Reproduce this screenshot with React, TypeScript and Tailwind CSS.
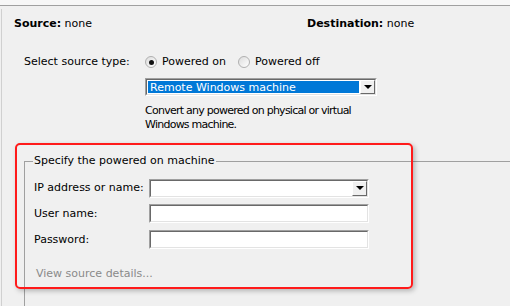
function Sunken({ className = "", children }: { className?: string; children?: React.ReactNode }) {
  return (
    <div className={`border border-t-[#a0a0a0] border-l-[#a0a0a0] border-r-white border-b-white ${className}`}>
      <div className="h-full w-full border border-t-[#696969] border-l-[#696969] border-r-[#e3e3e3] border-b-[#e3e3e3] bg-white flex">
        {children}
      </div>
    </div>
  );
}

function DropButton() {
  return (
    <div className="ml-auto h-full w-[15px] border border-t-white border-l-white border-r-[#696969] border-b-[#696969] bg-[#f0f0f0] flex items-center justify-center">
      <div className="w-0 h-0 border-l-[4px] border-r-[4px] border-t-[4px] border-l-transparent border-r-transparent border-t-black" />
    </div>
  );
}

function Radio({ checked, label }: { checked?: boolean; label: string }) {
  return (
    <div className="flex items-center gap-[5px]">
      <div className="w-[12px] h-[12px] rounded-full border border-[#b0b0b0] bg-gradient-to-br from-[#dcdcdc] to-white flex items-center justify-center">
        {checked && <div className="w-[5px] h-[5px] rounded-full bg-[#111]" />}
      </div>
      <span>{label}</span>
    </div>
  );
}

export default function App() {
  return (
    <div className="relative w-[510px] h-[306px] overflow-hidden bg-[#f0f0f0] text-[11px] leading-[14px] text-black font-['DejaVu_Sans',sans-serif]">
      <div className="h-[6px] bg-[#f7f7f7] border-b border-[#a0a0a0]" />
      <div className="h-[300px] ml-[1px] mt-[3px] border-l border-[#d0d0d0]">
        {/* header */}
        <div className="flex pt-[8px] pl-[12px]">
          <div className="w-[293px]">
            <span className="font-bold">Source:</span> none
          </div>
          <div>
            <span className="font-bold">Destination:</span> none
          </div>
        </div>

        {/* source type */}
        <div className="flex mt-[23px] pl-[22px]">
          <div className="w-[121px] pt-[1px]">Select source type:</div>
          <div className="flex flex-col">
            <div className="flex gap-[12px] h-[16px] items-center">
              <Radio checked label="Powered on" />
              <Radio label="Powered off" />
            </div>
            <Sunken className="mt-[8px] w-[232px] h-[18px]">
              <div className="flex-1 bg-[#0078d7] text-white pl-[2px] leading-[13px] m-[1px]">
                Remote Windows machine
              </div>
              <DropButton />
            </Sunken>
            <div className="mt-[8px] tracking-[-0.75px]">
              Convert any powered on physical or virtual
              <br />
              Windows machine.
            </div>
          </div>
        </div>

        {/* group box */}
        <div className="ml-[22px] mt-[29px] border-t border-l border-[#a0a0a0] h-[200px]">
          <div className="-mt-[8px] ml-[8px] px-[1px] bg-[#f0f0f0] w-fit">Specify the powered on machine</div>
          <div className="pl-[9px] pt-[11px] flex flex-col">
            <div className="flex items-center h-[18px]">
              <div className="w-[115px]">IP address or name:</div>
              <Sunken className="w-[220px] h-[19px]">
                <DropButton />
              </Sunken>
            </div>
            <div className="flex items-center h-[19px] mt-[7px]">
              <div className="w-[115px]">User name:</div>
              <Sunken className="w-[220px] h-[19px]" />
            </div>
            <div className="flex items-center h-[19px] mt-[7px]">
              <div className="w-[115px]">Password:</div>
              <Sunken className="w-[220px] h-[19px]" />
            </div>
            <div className="mt-[18px] pl-[2px] text-[#8a8a8a]">View source details...</div>
          </div>
        </div>
      </div>

      {/* highlight annotation */}
      <div className="absolute left-[15px] top-[143px] w-[398px] h-[146px] rounded-[5px] border-2 border-[#ff1a1a] shadow-[2px_2px_5px_rgba(0,0,0,0.25)]" />
    </div>
  );
}
